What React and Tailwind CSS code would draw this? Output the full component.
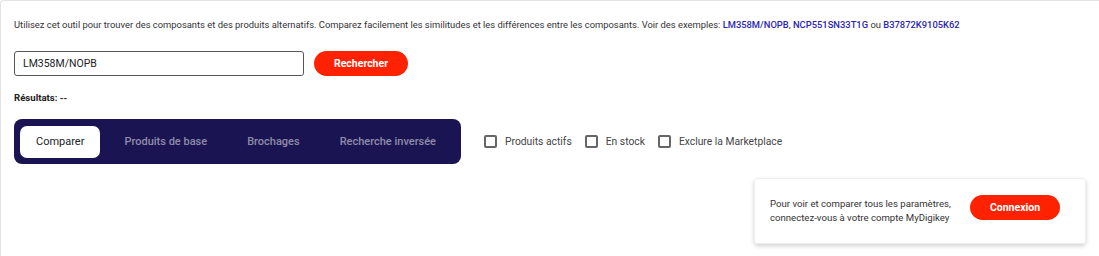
import React, { useState } from 'react';

const tabs = ['Comparer', 'Produits de base', 'Brochages', 'Recherche inversée'];
const filters = ['Produits actifs', 'En stock', 'Exclure la Marketplace'];

function Checkbox({ label }) {
  return (
    <label className="flex items-center gap-[8px] text-[10.3px] text-[#444] whitespace-nowrap">
      <span className="w-[13px] h-[13px] rounded-[2px] border-2 border-[#666] bg-white" />
      {label}
    </label>
  );
}

export default function App() {
  const [active, setActive] = useState(0);

  return (
    <div className="w-[1120px] h-[256px] bg-white border-t border-l border-[#e3e3e3] rounded-tl-[4px] font-['Roboto',sans-serif] text-[#222] overflow-hidden">
      <div className="pl-[13px] pt-[16px]">
        <p className="text-[9.4px] leading-[16px] text-[#333] whitespace-nowrap">
          Utilisez cet outil pour trouver des composants et des produits alternatifs. Comparez facilement les similitudes et les différences entre les composants. Voir des exemples:{' '}
          <a className="font-medium text-[#2b1fb5]">LM358M/NOPB</a>,{' '}
          <a className="font-medium text-[#2b1fb5]">NCP551SN33T1G</a> ou{' '}
          <a className="font-medium text-[#2b1fb5]">B37872K9105K62</a>
        </p>

        <div className="flex items-center gap-[10px] mt-[18px]">
          <input
            className="w-[290px] h-[25px] border border-[#555] rounded-[3px] px-[8px] text-[10.5px] text-[#222] outline-none"
            defaultValue="LM358M/NOPB"
          />
          <button className="w-[94px] h-[25px] rounded-full bg-[#ff2200] text-white text-[10.5px] font-bold">
            Rechercher
          </button>
        </div>

        <div className="mt-[15px] text-[9.6px] font-bold text-[#222]">Résultats: --</div>

        <div className="flex items-center mt-[14px]">
          <div className="flex items-center w-[447px] h-[45px] bg-[#1b1453] rounded-[8px] px-[6px]">
            {tabs.map((t, i) => (
              <button
                key={t}
                onClick={() => setActive(i)}
                className={
                  i === active
                    ? 'h-[32px] px-[16px] bg-white rounded-[7px] text-[11px] text-[#222] mr-[8px] whitespace-nowrap'
                    : 'h-[32px] px-[16px] text-[11px] font-medium text-[#8f8ca8] mr-[8px] whitespace-nowrap'
                }
              >
                {t}
              </button>
            ))}
          </div>
          <div className="flex items-center gap-[13px] ml-[23px]">
            {filters.map(f => (
              <Checkbox key={f} label={f} />
            ))}
          </div>
        </div>

        <div className="flex mt-[14px] pl-[740px]">
          <div className="w-[332px] h-[66px] rounded-[4px] border border-[#eee] shadow-[0_2px_4px_rgba(0,0,0,0.18)] flex items-center px-[15px] justify-between">
            <p className="text-[9.6px] leading-[14px] text-[#333] whitespace-nowrap">
              Pour voir et comparer tous les paramètres,
              <br />
              connectez-vous à votre compte MyDigikey
            </p>
            <button className="w-[90px] h-[25px] rounded-full bg-[#ff2200] text-white text-[10.5px] font-bold mr-[10px] -mt-[8px]">
              Connexion
            </button>
          </div>
        </div>
      </div>
    </div>
  );
}
